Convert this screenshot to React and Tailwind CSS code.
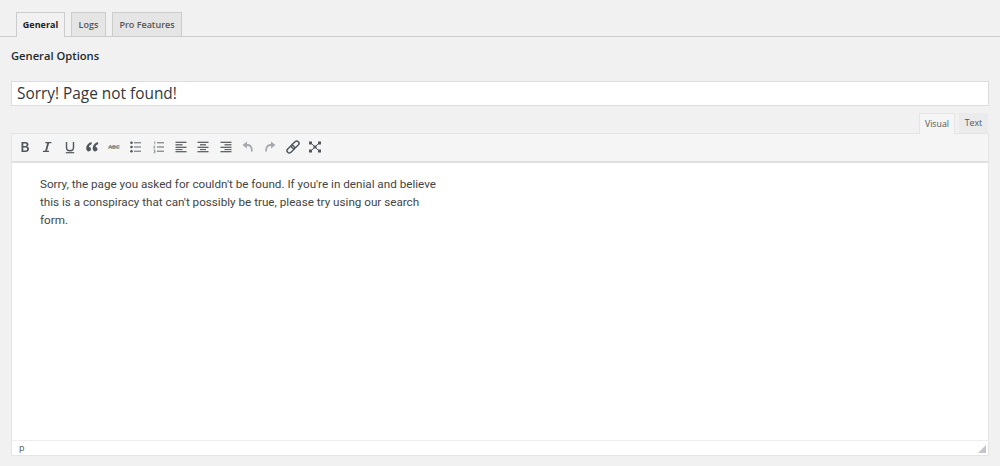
const ui = { fontFamily: '"Open Sans", sans-serif' };

function Ico({ children }) {
  return (
    <span className="flex h-[20px] w-[20px] items-center justify-center">
      <svg width="20" height="20" viewBox="0 0 20 20" fill="none">{children}</svg>
    </span>
  );
}
const C = "#50565c";
const Lines = ({ rows }) => rows.map(([x1, x2, y, w = 1.2], i) => <path key={i} d={`M${x1} ${y}H${x2}`} stroke={C} strokeWidth={w} />);

const icons = [
  <Ico key="b"><path d="M6.500 5h4c1.900 0 3 1 3 2.500 0 1.100-.6 1.800-1.600 2.100 1.300.2 2.100 1.200 2.100 2.500 0 1.800-1.300 2.900-3.400 2.900H6.500V5zM8.300 6.500v2.500h1.900c.9 0 1.400-.5 1.400-1.250S11.100 6.500 10.200 6.500H8.300zM8.300 10.400v3.100h2.100c1 0 1.700-.5 1.700-1.550s-.7-1.550-1.700-1.550H8.300z" fill={C} /></Ico>,
  <Ico key="i"><path d="M8.500 5h6l-.3 1.300h-2.100L10 13.700h2.100l-.3 1.300H5.800l.3-1.300h2.100l2-7.400H8.200z" fill={C} /></Ico>,
  <Ico key="u"><path d="M6.500 5v5.500c0 2.200 1.400 3.200 3.500 3.200s3.500-1 3.500-3.200V5" stroke={C} strokeWidth="1.400" /><path d="M5.800 15.700H14.200" stroke={C} strokeWidth="1.200" /></Ico>,
  <Ico key="q"><path d="M9.300 5C6.100 6.200 4.200 8.300 4.200 11.200c0 2 1.100 3.200 2.500 3.200 1.300 0 2.300-1 2.300-2.300 0-1.300-.9-2.200-2.100-2.200.2-1.200 1.100-2.200 2.900-3zM15.800 5c-3.200 1.200-5.100 3.300-5.100 6.200 0 2 1.100 3.200 2.500 3.200 1.300 0 2.300-1 2.300-2.300 0-1.300-.9-2.200-2.100-2.200.2-1.200 1.100-2.200 2.900-3z" fill={C} /></Ico>,
  <Ico key="abc"><Lines rows={[[4.500, 15.500, 10, .7]]} /><text x="10" y="12" textAnchor="middle" fontSize="6" fontWeight="600" fill="#6b7075" fontFamily="Open Sans, sans-serif">ABC</text></Ico>,
  <Ico key="ul"><circle cx="5.500" cy="5.800" r="1.300" fill={C} /><circle cx="5.500" cy="10" r="1.300" fill={C} /><circle cx="5.500" cy="14.200" r="1.300" fill={C} /><Lines rows={[[8, 15, 5.800, .9], [8, 15, 10, .9], [8, 15, 14.200, .9]]} /></Ico>,
  <Ico key="ol"><path d="M5 4.800h.8v2.600M4.500 9.200h1.400l-1.200 1.800h1.400M4.500 13h1.500v2.800H4.500M5 14.400h1" stroke="#777c81" strokeWidth=".7" /><Lines rows={[[8, 15, 5.800, .9], [8, 15, 10, .9], [8, 15, 14.200, .9]]} /></Ico>,
  <Ico key="al"><Lines rows={[[4.500, 15.500, 5.300], [4.500, 11.500, 7.800], [4.500, 15.500, 10.300], [4.500, 11.500, 12.600, 1], [4.500, 15.500, 14.700]]} /></Ico>,
  <Ico key="ac"><Lines rows={[[4.500, 15.500, 5.300], [7, 13, 7.800], [4.500, 15.500, 10.300], [7, 13, 12.600, 1], [4.500, 15.500, 14.700]]} /></Ico>,
  <Ico key="ar"><Lines rows={[[4.500, 15.500, 5.300], [8.500, 15.500, 7.800], [4.500, 15.500, 10.300], [8.500, 15.500, 12.600, 1], [4.500, 15.500, 14.700]]} /></Ico>,
  <Ico key="un"><path d="M9 4.500 4.500 8 9 11.500V9c2.800 0 4.100 1.600 4 5.500h1.700C15 9.500 13 7 9 7z" fill="#a6aaae" /></Ico>,
  <Ico key="re"><path d="M11 4.500 15.500 8 11 11.500V9c-2.800 0-4.100 1.600-4 5.500H5.300C5 9.500 7 7 11 7z" fill="#a6aaae" /></Ico>,
  <Ico key="link"><g transform="rotate(45 10 10)" stroke={C} strokeWidth="1.400"><rect x="7.700" y="2.500" width="4.600" height="8.700" rx="2.300" /><rect x="7.700" y="8.800" width="4.600" height="8.700" rx="2.300" /></g></Ico>,
  <Ico key="fs"><path d="M5.500 5.500 14.500 14.500M14.500 5.500 5.500 14.500" stroke={C} strokeWidth="1" /><rect x="4" y="4.500" width="3" height="3" fill={C} /><rect x="13" y="4.500" width="3" height="3" fill={C} /><rect x="4" y="12.500" width="3" height="3" fill={C} /><rect x="13" y="12.500" width="3" height="3" fill={C} /><rect x="8.500" y="8.500" width="3" height="3" fill={C} /></Ico>,
];

export default function App() {
  return (
    <div className="h-[466px] w-[1000px] overflow-hidden bg-[#f1f1f1] pl-[11px] pr-[11px] pt-[12px]" style={ui}>
      <div className="-ml-[11px] -mr-[11px] flex h-[25px] items-end gap-[6px] border-b border-[#cccccc] pl-[16px]">
        <div className="-mb-px flex h-[25px] w-[49px] items-center justify-center border border-b-0 border-[#cccccc] bg-[#f1f1f1] text-[9px] font-bold text-[#222222]">General</div>
        <div className="flex h-[24px] w-[35px] items-center justify-center border border-b-0 border-[#cccccc] bg-[#e5e5e5] text-[9px] font-semibold text-[#555555]">Logs</div>
        <div className="flex h-[24px] w-[70px] items-center justify-center border border-b-0 border-[#cccccc] bg-[#e5e5e5] text-[9px] font-semibold text-[#555555]">Pro Features</div>
      </div>
      <h2 className="mt-[11px] h-[16px] text-[11.200px] leading-[16px] font-semibold text-[#23282d]">General Options</h2>
      <div className="mt-[17px] flex h-[25px] items-center border border-[#dddddd] bg-white pl-[5px] pt-[1px] text-[15.400px] text-[#32373c]">Sorry! Page not found!</div>
      <div className="mt-[7px] flex h-[20px] items-end justify-end gap-[4px] pr-[1px] text-[8.800px] text-[#555555]">
        <div className="-mb-px z-10 flex h-[21px] w-[36px] items-center justify-center border border-b-0 border-[#e5e5e5] bg-[#f5f5f5] pt-[1px]">Visual</div>
        <div className="flex h-[20px] w-[29px] items-center justify-center bg-[#ebebeb] pt-[1px]">Text</div>
      </div>
      <div className="border border-[#e5e5e5] bg-white">
        <div className="flex h-[29px] items-center gap-[2.300px] border-b-2 border-[#e0e0e0] bg-[#f5f5f5] pb-[2px] pl-[3px]">
          {icons}
        </div>
        <div className="h-[277px] pl-[28px] pt-[12px] text-[11.680px] leading-[18px] text-[#444444]" style={{ fontFamily: 'Roboto, sans-serif' }}>
          <p className="w-[400px]">Sorry, the page you asked for couldn't be found. If you're in denial and believe this is a conspiracy that can't possibly be true, please try using our search form.</p>
        </div>
        <div className="relative flex h-[15px] items-center border-t border-[#eeeeee] pl-[7px] text-[9px] text-[#555555]">
          p
          <svg className="absolute bottom-[2px] right-[2px]" width="8" height="8" viewBox="0 0 8 8"><path d="M8 0V8H0z" fill="#c5c5cc" /></svg>
        </div>
      </div>
    </div>
  );
}
